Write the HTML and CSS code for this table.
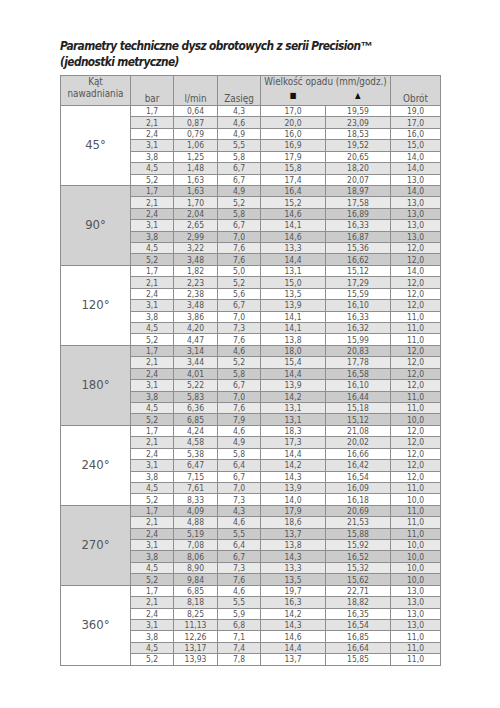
FILE: index.html
```html
<!DOCTYPE html>
<html lang="pl">
<head>
<meta charset="utf-8">
<title>Parametry techniczne dysz obrotowych</title>
<link rel="stylesheet" href="styles.css">
</head>
<body>
<div class="page">
  <h1 class="title">Parametry techniczne dysz obrotowych z serii Precision<span class="tm">™</span><br>(jednostki metryczne)</h1>
  <table class="spec">
    <colgroup>
      <col class="c-angle"><col class="c-bar"><col class="c-lmin"><col class="c-range"><col class="c-sq"><col class="c-tri"><col class="c-rot">
    </colgroup>
    <thead>
      <tr class="head">
        <th class="h-angle">Kąt<br>nawadniania</th>
        <th class="h-bottom">bar</th>
        <th class="h-bottom">l/min</th>
        <th class="h-bottom">Zasięg</th>
        <th class="h-precip" colspan="2">
          <div class="precip-title">Wielkość opadu (mm/godz.)</div>
          <div class="precip-icons"><span class="ico">■</span><span class="ico">▲</span></div>
        </th>
        <th class="h-bottom">Obrót</th>
      </tr>
    </thead>
    <tbody class="g-plain">
      <tr><td class="angle" rowspan="7">45°</td><td>1,7</td><td>0,64</td><td>4,3</td><td>17,0</td><td>19,59</td><td>19,0</td></tr>
      <tr><td>2,1</td><td>0,87</td><td>4,6</td><td>20,0</td><td>23,09</td><td>17,0</td></tr>
      <tr><td>2,4</td><td>0,79</td><td>4,9</td><td>16,0</td><td>18,53</td><td>16,0</td></tr>
      <tr><td>3,1</td><td>1,06</td><td>5,5</td><td>16,9</td><td>19,52</td><td>15,0</td></tr>
      <tr><td>3,8</td><td>1,25</td><td>5,8</td><td>17,9</td><td>20,65</td><td>14,0</td></tr>
      <tr><td>4,5</td><td>1,48</td><td>6,7</td><td>15,8</td><td>18,20</td><td>14,0</td></tr>
      <tr><td>5,2</td><td>1,63</td><td>6,7</td><td>17,4</td><td>20,07</td><td>13,0</td></tr>
    </tbody>
    <tbody class="g-shade">
      <tr><td class="angle" rowspan="7">90°</td><td>1,7</td><td>1,63</td><td>4,9</td><td>16,4</td><td>18,97</td><td>14,0</td></tr>
      <tr><td>2,1</td><td>1,70</td><td>5,2</td><td>15,2</td><td>17,58</td><td>13,0</td></tr>
      <tr><td>2,4</td><td>2,04</td><td>5,8</td><td>14,6</td><td>16,89</td><td>13,0</td></tr>
      <tr><td>3,1</td><td>2,65</td><td>6,7</td><td>14,1</td><td>16,33</td><td>13,0</td></tr>
      <tr><td>3,8</td><td>2,99</td><td>7,0</td><td>14,6</td><td>16,87</td><td>13,0</td></tr>
      <tr><td>4,5</td><td>3,22</td><td>7,6</td><td>13,3</td><td>15,36</td><td>12,0</td></tr>
      <tr><td>5,2</td><td>3,48</td><td>7,6</td><td>14,4</td><td>16,62</td><td>12,0</td></tr>
    </tbody>
    <tbody class="g-plain">
      <tr><td class="angle" rowspan="7">120°</td><td>1,7</td><td>1,82</td><td>5,0</td><td>13,1</td><td>15,12</td><td>14,0</td></tr>
      <tr><td>2,1</td><td>2,23</td><td>5,2</td><td>15,0</td><td>17,29</td><td>12,0</td></tr>
      <tr><td>2,4</td><td>2,38</td><td>5,6</td><td>13,5</td><td>15,59</td><td>12,0</td></tr>
      <tr><td>3,1</td><td>3,48</td><td>6,7</td><td>13,9</td><td>16,10</td><td>12,0</td></tr>
      <tr><td>3,8</td><td>3,86</td><td>7,0</td><td>14,1</td><td>16,33</td><td>11,0</td></tr>
      <tr><td>4,5</td><td>4,20</td><td>7,3</td><td>14,1</td><td>16,32</td><td>11,0</td></tr>
      <tr><td>5,2</td><td>4,47</td><td>7,6</td><td>13,8</td><td>15,99</td><td>11,0</td></tr>
    </tbody>
    <tbody class="g-shade">
      <tr><td class="angle" rowspan="7">180°</td><td>1,7</td><td>3,14</td><td>4,6</td><td>18,0</td><td>20,83</td><td>12,0</td></tr>
      <tr><td>2,1</td><td>3,44</td><td>5,2</td><td>15,4</td><td>17,78</td><td>12,0</td></tr>
      <tr><td>2,4</td><td>4,01</td><td>5,8</td><td>14,4</td><td>16,58</td><td>12,0</td></tr>
      <tr><td>3,1</td><td>5,22</td><td>6,7</td><td>13,9</td><td>16,10</td><td>12,0</td></tr>
      <tr><td>3,8</td><td>5,83</td><td>7,0</td><td>14,2</td><td>16,44</td><td>11,0</td></tr>
      <tr><td>4,5</td><td>6,36</td><td>7,6</td><td>13,1</td><td>15,18</td><td>11,0</td></tr>
      <tr><td>5,2</td><td>6,85</td><td>7,9</td><td>13,1</td><td>15,12</td><td>10,0</td></tr>
    </tbody>
    <tbody class="g-plain">
      <tr><td class="angle" rowspan="7">240°</td><td>1,7</td><td>4,24</td><td>4,6</td><td>18,3</td><td>21,08</td><td>12,0</td></tr>
      <tr><td>2,1</td><td>4,58</td><td>4,9</td><td>17,3</td><td>20,02</td><td>12,0</td></tr>
      <tr><td>2,4</td><td>5,38</td><td>5,8</td><td>14,4</td><td>16,66</td><td>12,0</td></tr>
      <tr><td>3,1</td><td>6,47</td><td>6,4</td><td>14,2</td><td>16,42</td><td>12,0</td></tr>
      <tr><td>3,8</td><td>7,15</td><td>6,7</td><td>14,3</td><td>16,54</td><td>12,0</td></tr>
      <tr><td>4,5</td><td>7,61</td><td>7,0</td><td>13,9</td><td>16,09</td><td>11,0</td></tr>
      <tr><td>5,2</td><td>8,33</td><td>7,3</td><td>14,0</td><td>16,18</td><td>10,0</td></tr>
    </tbody>
    <tbody class="g-shade">
      <tr><td class="angle" rowspan="7">270°</td><td>1,7</td><td>4,09</td><td>4,3</td><td>17,9</td><td>20,69</td><td>11,0</td></tr>
      <tr><td>2,1</td><td>4,88</td><td>4,6</td><td>18,6</td><td>21,53</td><td>11,0</td></tr>
      <tr><td>2,4</td><td>5,19</td><td>5,5</td><td>13,7</td><td>15,88</td><td>11,0</td></tr>
      <tr><td>3,1</td><td>7,08</td><td>6,4</td><td>13,8</td><td>15,92</td><td>10,0</td></tr>
      <tr><td>3,8</td><td>8,06</td><td>6,7</td><td>14,3</td><td>16,52</td><td>10,0</td></tr>
      <tr><td>4,5</td><td>8,90</td><td>7,3</td><td>13,3</td><td>15,32</td><td>10,0</td></tr>
      <tr><td>5,2</td><td>9,84</td><td>7,6</td><td>13,5</td><td>15,62</td><td>10,0</td></tr>
    </tbody>
    <tbody class="g-plain">
      <tr><td class="angle" rowspan="7">360°</td><td>1,7</td><td>6,85</td><td>4,6</td><td>19,7</td><td>22,71</td><td>13,0</td></tr>
      <tr><td>2,1</td><td>8,18</td><td>5,5</td><td>16,3</td><td>18,82</td><td>13,0</td></tr>
      <tr><td>2,4</td><td>8,25</td><td>5,9</td><td>14,2</td><td>16,35</td><td>13,0</td></tr>
      <tr><td>3,1</td><td>11,13</td><td>6,8</td><td>14,3</td><td>16,54</td><td>13,0</td></tr>
      <tr><td>3,8</td><td>12,26</td><td>7,1</td><td>14,6</td><td>16,85</td><td>11,0</td></tr>
      <tr><td>4,5</td><td>13,17</td><td>7,4</td><td>14,4</td><td>16,64</td><td>11,0</td></tr>
      <tr><td>5,2</td><td>13,93</td><td>7,8</td><td>13,7</td><td>15,85</td><td>11,0</td></tr>
    </tbody>
  </table>
</div>
</body>
</html>
```
FILE: styles.css
```css
html, body {
  margin: 0;
  padding: 0;
  background: #ffffff;
}
.page {
  padding: 38px 0 0 60px;
  font-family: "DejaVu Sans Condensed", "Liberation Sans Narrow", "Roboto", sans-serif;
  color: #555555;
}
.title {
  margin: 0 0 5px 0;
  font-size: 11.8px;
  line-height: 16px;
  letter-spacing: -0.6px;
  font-weight: bold;
  font-style: italic;
  color: #222222;
}
.tm {
  font-family: "Liberation Sans", sans-serif;
  letter-spacing: 0;
}
.spec {
  border-collapse: collapse;
  table-layout: fixed;
  width: 380px;
  font-size: 8.5px;
}
.c-angle { width: 70px; }
.c-bar { width: 43px; }
.c-lmin { width: 44px; }
.c-range { width: 43px; }
.c-sq { width: 65px; }
.c-tri { width: 65px; }
.c-rot { width: 50px; }
.spec th, .spec td {
  border: 1px solid #8e8e8e;
  padding: 0;
  text-align: center;
  line-height: 10px;
  font-weight: normal;
}
.head {
  height: 30px;
  background: #d6d6d6;
}
.head th {
  font-size: 9.8px;
  line-height: 12px;
  color: #555555;
}
.h-angle {
  vertical-align: top;
  padding-top: 1px;
}
.h-bottom {
  vertical-align: bottom;
  padding-bottom: 3px;
}
.h-precip {
  vertical-align: top;
  padding-top: 1px;
}
.precip-icons {
  display: flex;
  margin-top: 3px;
  color: #111111;
  font-size: 8px;
  line-height: 10px;
}
.ico {
  flex: 1;
  text-align: center;
}
.spec tbody tr {
  height: 11.43px;
}
.spec td.angle {
  font-size: 13px;
  line-height: 14px;
  vertical-align: middle;
  color: #555555;
}
.g-plain tr:nth-child(odd) td { background: #ffffff; }
.g-plain tr:nth-child(even) td { background: #e3e3e3; }
.g-shade tr:nth-child(odd) td { background: #cbcbcb; }
.g-shade tr:nth-child(even) td { background: #e9e9e9; }
.g-plain tr td.angle { background: #ffffff; }
.g-shade tr td.angle { background: #d2d2d2; }
```
